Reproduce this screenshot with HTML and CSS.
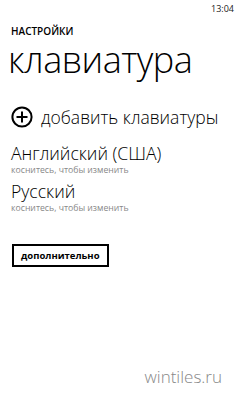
FILE: index.html
```html
<!DOCTYPE html>
<html>
<head>
<meta charset="utf-8">
<link rel="stylesheet" href="styles.css">
</head>
<body>
<div class="screen">
  <div class="status">13:04</div>
  <div class="app-title">НАСТРОЙКИ</div>
  <div class="page-title">клавиатура</div>
  <div class="add-row">
    <svg class="add-icon" width="22" height="22" viewBox="0 0 22 22">
      <circle cx="11" cy="11" r="9.6" fill="none" stroke="#000" stroke-width="2"/>
      <path d="M11 5.5V16.5M5.5 11H16.5" stroke="#000" stroke-width="2"/>
    </svg>
    <span class="add-text">добавить клавиатуры</span>
  </div>
  <div class="items">
    <div class="item">
      <div class="item-title">Английский (США)</div>
      <div class="item-sub">коснитесь, чтобы изменить</div>
    </div>
    <div class="item">
      <div class="item-title">Русский</div>
      <div class="item-sub">коснитесь, чтобы изменить</div>
    </div>
  </div>
  <div class="btn-row">
    <div class="btn">дополнительно</div>
  </div>
  <div class="footer">wintiles.ru</div>
</div>
</body>
</html>
```
FILE: styles.css
```css
html, body {
  margin: 0;
  padding: 0;
  background: #fff;
}
.screen {
  width: 240px;
  height: 400px;
  display: flex;
  flex-direction: column;
  font-family: "Open Sans", "Noto Sans", sans-serif;
  color: #000;
}
.status {
  height: 17px;
  font-size: 9px;
  line-height: 17px;
  text-align: right;
  padding-right: 6px;
  color: #222;
}
.app-title {
  margin-top: 9px;
  padding-left: 11px;
  font-size: 10px;
  font-weight: 600;
  line-height: 10px;
}
.page-title {
  margin-top: 2px;
  padding-left: 8px;
  font-size: 36px;
  font-weight: 300;
  line-height: 44px;
  letter-spacing: -0.5px;
}
.add-row {
  margin-top: 23px;
  padding-left: 11px;
  display: flex;
  align-items: center;
  gap: 8px;
  height: 24px;
}
.add-icon {
  display: block;
}
.add-text {
  font-size: 17.5px;
  line-height: 24px;
  font-weight: 300;
}
.items {
  margin-top: 13px;
  display: flex;
  flex-direction: column;
  gap: 5px;
}
.item {
  padding-left: 11px;
}
.item-title {
  font-size: 17.6px;
  line-height: 22px;
  font-weight: 300;
}
.item-sub {
  margin-top: 1px;
  font-size: 8.7px;
  line-height: 10px;
  color: #888;
}
.btn-row {
  margin-top: 31px;
  padding-left: 12px;
  display: flex;
}
.btn {
  border: 2px solid #000;
  font-size: 9.5px;
  font-weight: 700;
  padding: 4px 7px;
  line-height: 11px;
}
.footer {
  margin-top: auto;
  margin-bottom: 12px;
  text-align: right;
  padding-right: 18px;
  font-size: 17px;
  font-weight: 300;
  color: #888;
}
```
